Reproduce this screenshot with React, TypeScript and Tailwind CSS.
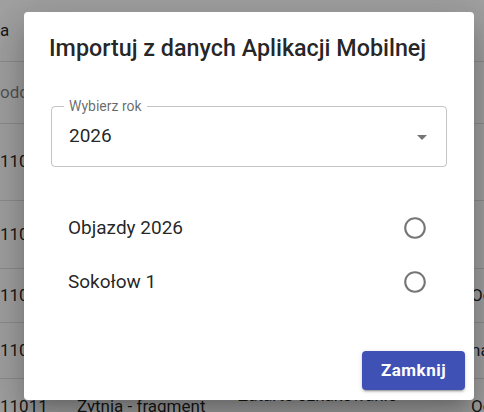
import React from "react";

const font = "font-['Roboto',sans-serif]";

function BgRow({
  h,
  c1,
  c2,
  c3,
  c4,
  muted,
  border = true,
}: {
  h: string;
  c1?: React.ReactNode;
  c2?: React.ReactNode;
  c3?: React.ReactNode;
  c4?: React.ReactNode;
  muted?: boolean;
  border?: boolean;
}) {
  return (
    <div className={`flex items-center ${h} ${border ? "border-b border-[#e0e0e0]" : ""} text-[17px] ${muted ? "text-black/50" : "text-black/[0.87]"}`}>
      <div className="w-[77px] shrink-0 whitespace-nowrap">{c1}</div>
      <div className="w-[161px] shrink-0 whitespace-nowrap">{c2}</div>
      <div className="w-[233px] shrink-0 leading-[24px]">{c3}</div>
      <div className="flex-1 whitespace-nowrap">{c4}</div>
    </div>
  );
}

export default function App() {
  return (
    <div className={`relative w-[484px] h-[412px] overflow-hidden bg-white ${font}`}>
      {/* background table */}
      <div className="flex flex-col">
        <BgRow h="h-[62px]" c1="a" />
        <BgRow h="h-[62px]" c1="odcinek" muted />
        <BgRow h="h-[77px]" c1="11001" />
        <BgRow h="h-[68px]" c1="11002" />
        <BgRow h="h-[54px]" c1="11003" c4="Od" />
        <BgRow h="h-[56px]" c1="11004" c4="na" />
        <BgRow
          h="h-[56px]"
          border={false}
          c1="11011"
          c2="Zytnia - fragment"
          c3={<><span>Zatarte oznakowanie</span><br /><span>pionowe</span></>}
          c4="Od"
        />
      </div>

      {/* backdrop */}
      <div className="absolute inset-0 bg-black/[0.37]" />

      {/* dialog */}
      <div className="absolute left-[24px] top-[12px] w-[450px] h-[388px] bg-white rounded-[4px] flex flex-col shadow-[0_11px_15px_-7px_rgba(0,0,0,0.2),0_24px_38px_3px_rgba(0,0,0,0.14),0_9px_46px_8px_rgba(0,0,0,0.12)]">
        <h2 className="pt-[20px] pl-[25px] text-[23.3px] leading-[32px] font-medium text-black/[0.87] whitespace-nowrap">
          Importuj z danych Aplikacji Mobilnej
        </h2>

        <div className="px-[27px] mt-[42px]">
          <div className="relative h-[61px] rounded-[4px] border border-black/[0.23] flex items-center">
            <span className="absolute left-[12px] top-[-9px] bg-white px-[5px] text-[14px] leading-[16px] text-black/60">
              Wybierz rok
            </span>
            <span className="pl-[17px] text-[19px] text-black/[0.87] flex-1">2026</span>
            <svg viewBox="0 0 24 24" className="w-[24px] h-[24px] mr-[12px] fill-black/[0.54]">
              <path d="M7 10l5 5 5-5z" />
            </svg>
          </div>

          <div className="mt-[34px] flex flex-col">
            {["Objazdy 2026", "Sokołow 1"].map((t) => (
              <div key={t} className="h-[54px] flex items-center pl-[17px] pr-[19px]">
                <span className="flex-1 text-[19px] text-black/[0.87]">{t}</span>
                <svg viewBox="0 0 24 24" className="w-[26px] h-[26px] fill-black/[0.54]">
                  <path d="M12 2C6.48 2 2 6.48 2 12s4.480 10 10 10 10-4.48 10-10S17.52 2 12 2zm0 18c-4.42 0-8-3.58-8-8s3.58-8 8-8 8 3.58 8 8-3.58 8-8 8z" />
                </svg>
              </div>
            ))}
          </div>
        </div>

        <div className="flex-1" />
        <div className="flex justify-end pr-[9px] pb-[10px]">
          <button className="w-[103px] h-[39px] rounded-[4px] bg-[#3f51b5] text-white text-[17px] font-bold tracking-[0.03em] shadow-[0_3px_1px_-2px_rgba(0,0,0,0.2),0_2px_2px_0_rgba(0,0,0,0.14),0_1px_5px_0_rgba(0,0,0,0.12)]">
            Zamknij
          </button>
        </div>
      </div>
    </div>
  );
}
